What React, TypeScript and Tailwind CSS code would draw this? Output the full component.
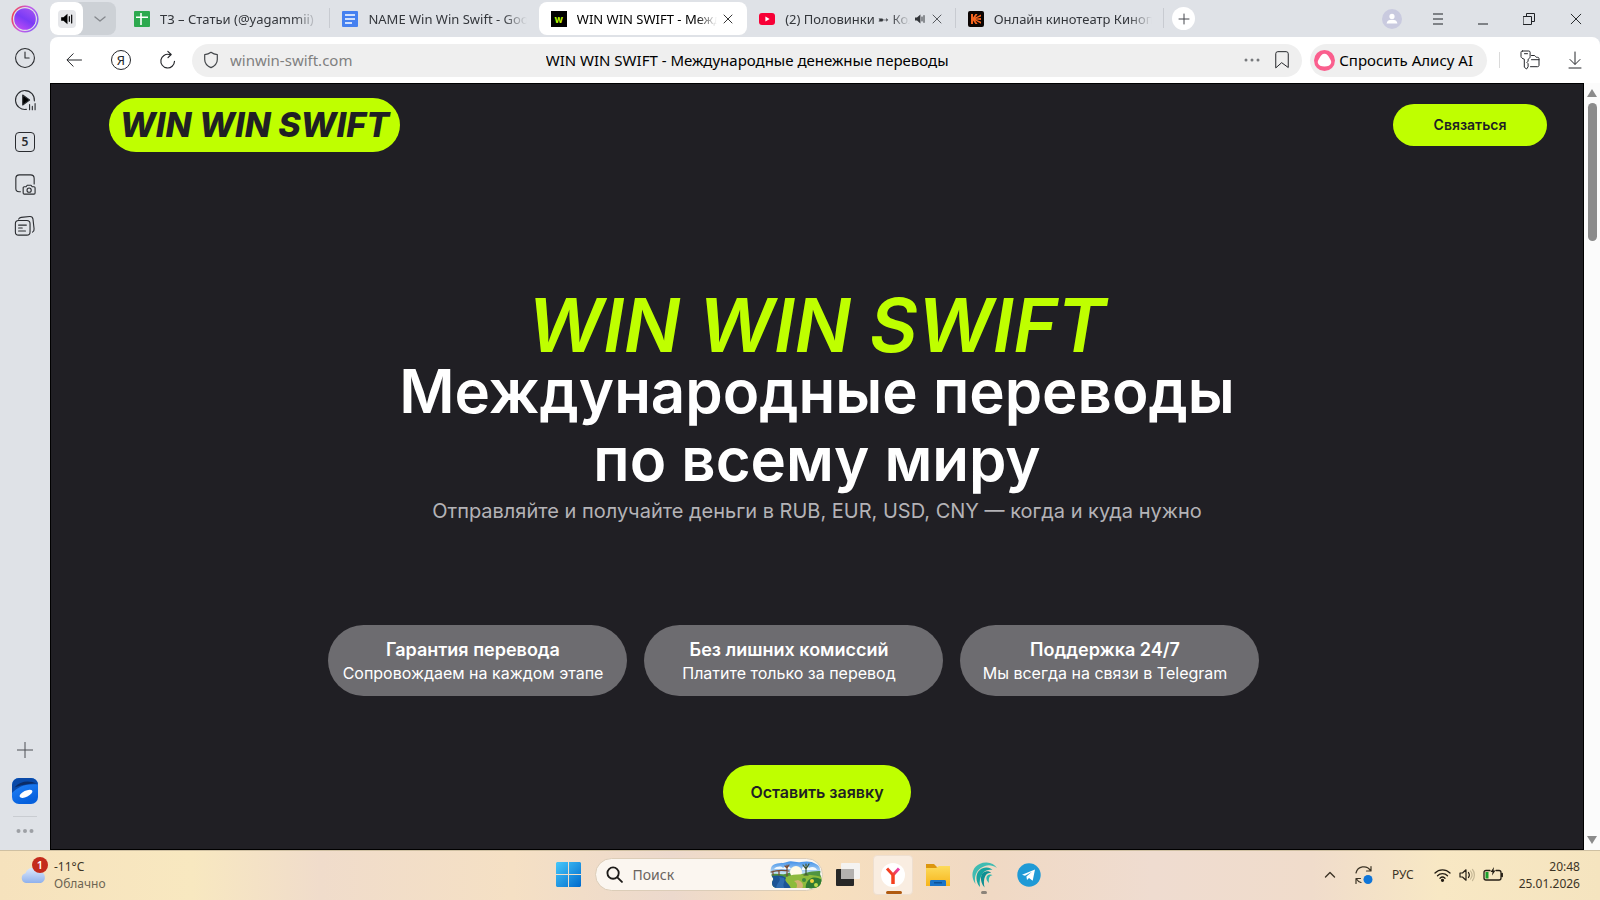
import { ReactNode } from "react";
import clsx from "clsx";

const chromeFont = "font-['Noto_Sans','Open_Sans',sans-serif]";
const siteFont = "font-['Inter',sans-serif]";

interface IconProps {
  className?: string;
  box?: string;
  width?: number;
  children: ReactNode;
}

const Icon = ({ className, box = "0 0 24 24", width = 1.2, children }: IconProps) => (
  <svg
    viewBox={box}
    className={clsx("shrink-0", className)}
    fill="none"
    stroke="currentColor"
    strokeWidth={width}
    strokeLinecap="round"
    strokeLinejoin="round"
    aria-hidden="true"
  >
    {children}
  </svg>
);

const CloseIcon = ({ className }: { className?: string }) => (
  <Icon className={className} box="0 0 10 10" width={0.8}>
    <path d="M1 1l8 8M9 1L1 9" />
  </Icon>
);

const SheetsIcon = () => (
  <Icon className="size-4" box="0 0 16 16" width={1.6}>
    <rect width="16" height="16" rx="1" fill="#2da94f" stroke="none" />
    <path d="M2 6.2h12M7 2v12" stroke="#fff" strokeLinecap="butt" />
  </Icon>
);

const DocsIcon = () => (
  <Icon className="size-4" box="0 0 16 16" width={1.6}>
    <rect width="16" height="16" rx="1" fill="#4681f0" stroke="none" />
    <path d="M3 4h10M3 8h10M3 12h7" stroke="#fff" strokeLinecap="butt" />
  </Icon>
);

const YoutubeIcon = () => (
  <Icon className="size-4" box="0 0 16 16">
    <rect y="2" width="16" height="12" rx="3" fill="#f70036" stroke="none" />
    <path d="M6.4 5.6v4.8L10.6 8z" fill="#fff" stroke="none" />
  </Icon>
);

const KinoIcon = () => (
  <Icon className="size-4" box="0 0 16 16">
    <rect width="16" height="16" rx="2" fill="#0b0503" stroke="none" />
    <path
      d="M3 3h2v3.6L7.4 3h2.2L7.2 6.6 13 3.4v2L7.6 7.5l5.4-.6v2.2l-5.4-.5 5.4 2.1v2L7.2 9.5 9.6 13H7.4L5 9.5V13H3z"
      fill="#f5641e"
      stroke="none"
    />
  </Icon>
);

const SiteIcon = () => (
  <span className="flex size-4 shrink-0 items-center justify-center bg-black font-['Inter',sans-serif] text-[10px] leading-none font-bold text-[#b9f600]">
    w
  </span>
);

const SpeakerIcon = ({ className }: { className?: string }) => (
  <Icon className={className} box="0 0 12 12" width={1}>
    <path d="M1 4.4h2L6.4 1.6v8.8L3 7.6H1z" fill="currentColor" stroke="none" />
    <path d="M8 4v4M10 2.6v6.8" />
  </Icon>
);

interface TabProps {
  icon: ReactNode;
  title: string;
  active?: boolean;
  sound?: boolean;
  closable?: boolean;
  divider?: boolean;
}

const Tab = ({ icon, title, active, sound, closable, divider }: TabProps) => (
  <div
    className={clsx(
      "relative flex h-[33px] min-w-0 flex-1 items-center rounded-lg px-3",
      active ? "bg-white text-black" : "text-[#33363b]",
    )}
  >
    <button className="flex min-w-0 grow items-center gap-2.5 text-left">
      {icon}
      <span className="grow overflow-hidden text-[13px] leading-5 whitespace-nowrap [mask-image:linear-gradient(to_right,black_85%,transparent)]">
        {title}
      </span>
    </button>
    {sound && <SpeakerIcon className="ml-1 size-3" />}
    {closable && (
      <button aria-label="Закрыть вкладку" className="ml-1 p-0.5">
        <CloseIcon className="size-2.5" />
      </button>
    )}
    {divider && <span className="absolute top-1.5 right-0 h-5 w-px bg-[#c8cbd1]" />}
  </div>
);

const TabStrip = () => (
  <header className="flex h-[37px] shrink-0 items-center">
    <div className="flex w-[50px] shrink-0 justify-center">
      <button aria-label="Алиса">
        <Icon className="size-7" box="0 0 28 28" width={1.6}>
          <defs>
            <linearGradient id="ring" x1="0" y1="0.2" x2="1" y2="0.6">
              <stop offset="0" stopColor="#f4434e" />
              <stop offset="0.5" stopColor="#c95be8" />
              <stop offset="1" stopColor="#8a5cf5" />
            </linearGradient>
            <linearGradient id="ball" x1="0.2" y1="1" x2="0.8" y2="0">
              <stop offset="0" stopColor="#c04cf5" />
              <stop offset="0.5" stopColor="#7a3bf6" />
              <stop offset="1" stopColor="#a352f3" />
            </linearGradient>
          </defs>
          <circle cx="14" cy="14" r="12.8" stroke="url(#ring)" />
          <circle cx="14" cy="14" r="10.8" fill="url(#ball)" stroke="none" />
        </Icon>
      </button>
    </div>
    <div className="flex h-[33px] w-[66px] shrink-0 rounded-lg bg-[#cdd1d6]">
      <button aria-label="Звук" className="flex w-[33px] items-center justify-center rounded-lg bg-white">
        <span className="flex size-[18px] items-center justify-center rounded bg-[#e6e7ea]">
          <SpeakerIcon className="size-3.5" />
        </span>
      </button>
      <button aria-label="Список вкладок" className="flex grow items-center justify-center text-[#85888d]">
        <Icon className="size-3" box="0 0 12 12" width={1.4}>
          <path d="M1 4l5 4 5-4" />
        </Icon>
      </button>
    </div>
    <nav aria-label="Вкладки" className="ml-1.5 flex w-[1042px] min-w-0 items-center">
      <Tab icon={<SheetsIcon />} title="ТЗ – Статьи (@yagammii)" divider />
      <Tab icon={<DocsIcon />} title="NAME Win Win Swift - Goo" />
      <Tab icon={<SiteIcon />} title="WIN WIN SWIFT - Межд" active closable />
      <Tab icon={<YoutubeIcon />} title="(2) Половинки ➸ Кол" sound closable divider />
      <Tab icon={<KinoIcon />} title="Онлайн кинотеатр Киноп" divider />
    </nav>
    <button
      aria-label="Новая вкладка"
      className="ml-2 flex size-[23px] shrink-0 items-center justify-center rounded-full bg-white text-[#44474c]"
    >
      <Icon className="size-3" box="0 0 12 12" width={1}>
        <path d="M6 1v10M1 6h10" />
      </Icon>
    </button>
    <div className="mr-[18px] ml-auto flex items-center gap-[27px] text-[#1f2226]">
      <button aria-label="Профиль" className="flex size-5 items-center justify-center rounded-full bg-[#c9cadf]">
        <Icon className="size-3" box="0 0 12 12">
          <g fill="#fff" stroke="none">
            <circle cx="6" cy="3.4" r="2.6" />
            <path d="M.6 10.6C1 7.8 2.8 6.8 6 6.8s5 1 5.4 3.8z" />
          </g>
        </Icon>
      </button>
      <button aria-label="Меню" className="pr-1.5 pl-1">
        <Icon className="h-3 w-2.5" box="0 0 10 12" width={1}>
          <path d="M0 1h10M0 6h10M0 11h10" />
        </Icon>
      </button>
      <button aria-label="Свернуть" className="pl-0.5">
        <Icon className="h-3 w-2.5" box="0 0 10 12" width={1}>
          <path d="M0 11h10" />
        </Icon>
      </button>
      <button aria-label="Развернуть" className="px-2">
        <Icon className="size-3" box="0 0 12 12" width={1}>
          <path d="M.5 3.5h8v8h-8zM3.5 3.5v-3h8v8h-3" />
        </Icon>
      </button>
      <button aria-label="Закрыть">
        <CloseIcon className="size-3" />
      </button>
    </div>
  </header>
);

const Toolbar = () => (
  <div className="flex h-[46px] shrink-0 items-center rounded-t-lg bg-white text-[#24262a]">
    <div className="flex w-[142px] shrink-0 items-center gap-[27px] pl-3.5">
      <button aria-label="Назад">
        <Icon className="size-5">
          <path d="M21 12H4M11 4.5L3.5 12l7.5 7.5" />
        </Icon>
      </button>
      <button
        aria-label="Яндекс"
        className="flex size-5 items-center justify-center rounded-full border border-[#24262a] text-[13px] leading-none"
      >
        Я
      </button>
      <button aria-label="Обновить">
        <Icon className="size-5" width={1.4}>
          <path d="M19.8 13.6A8.2 8.2 0 1 1 13.6 5.4h2M11.8 1.6l4 3.8-3.8 3.8" />
        </Icon>
      </button>
    </div>
    <div className="flex h-[33px] min-w-0 grow items-center rounded-full bg-[#efefef] px-2.5">
      <div className="flex flex-1 items-center gap-2.5">
        <Icon className="size-[18px] text-[#44474b]" width={1.6}>
          <path d="M12 1.8c2.6 1.9 5.2 2.8 8.4 3v6.4c0 5-3.3 8.6-8.4 11-5.1-2.4-8.4-6-8.4-11V4.8c3.2-.2 5.8-1.1 8.4-3z" />
        </Icon>
        <input
          aria-label="Адресная строка"
          className="w-60 bg-transparent text-[15px] text-[#808080] outline-none"
          defaultValue="winwin-swift.com"
        />
      </div>
      <span className="truncate text-[15px] leading-5 text-black">
        WIN WIN SWIFT - Международные денежные переводы
      </span>
      <div className="flex flex-1 items-center justify-end gap-3">
        <button aria-label="Ещё" className="text-[#77797c]">
          <Icon className="h-1 w-4" box="0 0 16 4">
            <g fill="currentColor" stroke="none">
              <circle cx="2" cy="2" r="1.5" />
              <circle cx="8" cy="2" r="1.5" />
              <circle cx="14" cy="2" r="1.5" />
            </g>
          </Icon>
        </button>
        <button aria-label="Закладки">
          <Icon className="size-5">
            <path d="M4.5 21V4.5A2.5 2.5 0 0 1 7 2h10a2.5 2.5 0 0 1 2.5 2.5V21L12 15.5z" />
          </Icon>
        </button>
      </div>
    </div>
    <button className="ml-2 flex h-[33px] shrink-0 items-center gap-1 rounded-full bg-[#efefef] pr-3.5 pl-1 text-[15px] text-black">
      <Icon className="size-[21px]" box="0 0 21 21">
        <circle cx="10.5" cy="10.5" r="10.5" fill="#fa5f8e" stroke="none" />
        <path
          d="M10.5 3.7c2.4 0 3.6 1.7 5 4.2 1.6 2.8 2 3.7 1.6 5.1-.6 2.4-3.2 3.6-6.6 3.6s-6-1.2-6.6-3.6c-.4-1.4 0-2.3 1.6-5.1 1.4-2.5 2.6-4.2 5-4.2z"
          fill="#fff"
          stroke="none"
        />
      </Icon>
      Спросить Алису AI
    </button>
    <div className="ml-3 h-4 w-px bg-[#dadada]" />
    <div className="mr-4 ml-5 flex items-center gap-7">
      <button aria-label="Пароли">
        <Icon className="size-5" box="0 0 20 20" width={1}>
          <path d="M2.5 1h6.3c.8 0 1.3.5 1.3 1.3v4.4c0 1.2-.9 2-2 2.5v2l-1.2 1.2 1.2 1.3v3.1L6.5 19l-2.2-1.8v-8C2.6 8.6 1 7.8 1 6.5V2.3C1 1.5 1.6 1 2.5 1zM4.5 3.7h3" />
          <path d="M11.5 5.5h2.8c1.2 0 1.2 1.8 2.3 1.8h.9c1 0 1.5.5 1.5 1.5v6.4c0 .9-.5 1.5-1.5 1.5h-7M11.5 9.7H19" />
        </Icon>
      </button>
      <button aria-label="Загрузки" className="pr-0.5">
        <Icon className="h-[18px] w-3.5" box="0 0 14 18" width={1}>
          <path d="M7 1v12M2 8.5l5 5 5-5M1 17h12" />
        </Icon>
      </button>
    </div>
  </div>
);

const Sidebar = () => (
  <aside className="flex w-[50px] shrink-0 flex-col items-center justify-between pt-2.5 pb-[17px] text-[#2a2c30]">
    <div className="flex flex-col gap-5">
      <button aria-label="История">
        <Icon className="size-[22px]">
          <circle cx="12" cy="12" r="10.3" />
          <path d="M12 5.5V12h4.5" />
        </Icon>
      </button>
      <button aria-label="Видео">
        <Icon className="size-[22px]">
          <path d="M13.5 22.2A10.3 10.3 0 1 1 22.2 13" />
          <path d="M9.5 6.5v11l7.5-5.5z" fill="#000" />
          <path d="M17 17v5.5M20 19v3.5M23 16v6.5" />
        </Icon>
      </button>
      <button aria-label="Вкладки" className="flex size-[22px] items-center justify-center">
        <span className="flex size-5 items-center justify-center rounded border border-[#2a2c30] text-xs leading-none font-semibold">
          5
        </span>
      </button>
      <button aria-label="Скриншот">
        <Icon className="size-[22px]">
          <path d="M7 20.5H5.5C3 20.5 2 19.5 2 17V6c0-2.5 1.5-4 4-4h12c2.5 0 4 1.5 4 4v6" />
          <path d="M10 16.2c0-.8.4-1.2 1.2-1.2h2l1.2-1.6h4.2l1.2 1.6h2c.8 0 1.2.4 1.2 1.2v5.6c0 .8-.4 1.2-1.2 1.2H11.2c-.8 0-1.2-.4-1.2-1.2z" />
          <circle cx="16.5" cy="18.7" r="2.3" />
        </Icon>
      </button>
      <button aria-label="Коллекции">
        <Icon className="size-[22px]">
          <rect x="1.5" y="6" width="16" height="16" rx="3.5" />
          <path d="M5 4.5c.6-1.200 1.500-1.700 2.800-1.900l9.200-1c2.200-.2 3.400.7 3.700 2.900l1.200 10.500c.2 1.600-.3 2.900-1.700 3.700M5 11h8.500M5 14.200h4M5 17.400h7.500" />
        </Icon>
      </button>
    </div>
    <div className="flex flex-col items-center">
      <button aria-label="Добавить" className="mb-5 text-[#4c4f54]">
        <Icon className="size-4" box="0 0 16 16" width={1}>
          <path d="M8 0v16M0 8h16" />
        </Icon>
      </button>
      <button aria-label="Диск">
        <Icon className="size-[26px]" box="0 0 26 26">
          <defs>
            <linearGradient id="disk" x1="0" y1="0" x2="0.4" y2="1">
              <stop offset="0" stopColor="#2a8bff" />
              <stop offset="1" stopColor="#0560dd" />
            </linearGradient>
          </defs>
          <g stroke="none">
            <rect width="26" height="26" rx="7" fill="url(#disk)" />
            <path d="M0 15V7a7 7 0 0 1 7-7h12a7 7 0 0 1 7 6.5C16 5 5 8.500 0 15z" fill="#0a4aa8" />
            <path d="M2.500 9.500C8 3 17 2 24.500 5.500 16 5.500 8 7.500 2.500 9.500z" fill="#0b2c66" />
            <ellipse cx="14" cy="15.800" rx="7" ry="3.100" fill="#fff" transform="rotate(-26 14 15.800)" />
          </g>
        </Icon>
      </button>
      <div className="my-3 h-px w-6 bg-[#c9ccd1]" />
      <button aria-label="Ещё" className="text-[#9da0a5]">
        <Icon className="h-1 w-[18px]" box="0 0 18 4">
          <g fill="currentColor" stroke="none">
            <circle cx="2.5" cy="2" r="2" />
            <circle cx="9" cy="2" r="2" />
            <circle cx="15.5" cy="2" r="2" />
          </g>
        </Icon>
      </button>
    </div>
  </aside>
);

const features = [
  { title: "Гарантия перевода", text: "Сопровождаем на каждом этапе" },
  { title: "Без лишних комиссий", text: "Платите только за перевод" },
  { title: "Поддержка 24/7", text: "Мы всегда на связи в Telegram" },
];

const Site = () => (
  <main className={clsx("flex min-w-0 grow flex-col border border-black bg-[#201f24]", siteFont)}>
    <div className="flex items-center justify-between pt-3.5 pr-9 pl-[58px]">
      <a
        href="#"
        className="flex h-[54px] w-[291px] items-center justify-center rounded-full bg-[#bfff00] text-[34px] leading-none font-extrabold text-[#201f24] italic"
      >
        WIN WIN SWIFT
      </a>
      <button className="h-[42px] w-[154px] rounded-full bg-[#bfff00] text-sm font-semibold text-[#201f24]">
        Связаться
      </button>
    </div>
    <div className="flex flex-col items-center pt-[141px] text-center">
      <h1 className="text-[60px] leading-[68px] font-semibold text-white">
        <span className="block text-[74px] leading-[64px] text-[#bfff00] italic">WIN WIN SWIFT</span>
        Международные переводы
        <br />
        по всему миру
      </h1>
      <p className="text-xl leading-9 text-[#b4b3b7]">
        Отправляйте и получайте деньги в RUB, EUR, USD, CNY — когда и куда нужно
      </p>
      <ul className="mt-24 mr-12 flex gap-[17px] text-white">
        {features.map(({ title, text }) => (
          <li
            key={title}
            className="flex h-[71px] w-[299px] flex-col items-center justify-center rounded-full bg-[#6d6c70] pr-2"
          >
            <h2 className="text-lg leading-6 font-semibold">{title}</h2>
            <p className="text-base leading-[22px] whitespace-nowrap">{text}</p>
          </li>
        ))}
      </ul>
      <button className="mt-[69px] h-[54px] w-[188px] rounded-full bg-[#bfff00] text-base font-semibold text-[#201f24]">
        Оставить заявку
      </button>
    </div>
  </main>
);

const Scrollbar = () => (
  <div className="flex w-4 shrink-0 flex-col items-center bg-[#fbfbfb] py-1.5 text-[#8b8b8b]">
    <Icon className="h-2 w-2.5" box="0 0 10 8">
      <path d="M5 0l5 8H0z" fill="currentColor" stroke="none" />
    </Icon>
    <div className="mt-1.5 h-[138px] w-[9px] rounded-full bg-[#8b8b8b]" />
    <Icon className="mt-auto h-2 w-2.5" box="0 0 10 8">
      <path d="M5 8l5-8H0z" fill="currentColor" stroke="none" />
    </Icon>
  </div>
);

const LandscapeArt = () => (
  <Icon className="h-7 w-[52px]" box="0 0 52 28">
    <defs>
      <linearGradient id="sky" x1="0" y1="0" x2="0" y2="1">
        <stop offset="0" stopColor="#3f8fe8" />
        <stop offset="0.5" stopColor="#d6ecf8" />
      </linearGradient>
      <clipPath id="blob">
        <path d="M2 5C6 1 12 3 17 1c5-2 9 1 14 0s11-1 15 2c4 2 5 6 4 10 2 4 2 9-1 12-3 3-9 2-14 2H8c-4 0-6-2-6-5 0-2 2-3 1-5-3-4-3-9-1-12z" />
      </clipPath>
    </defs>
    <g clipPath="url(#blob)" stroke="none">
      <rect width="52" height="28" fill="url(#sky)" />
      <path d="M4 8c3-3 7-3 9-1 3-3 7-2 8 1zM32 7c3-3 6-2 7 0 3-2 7-1 8 2H32z" fill="#f2f8fd" />
      <path d="M0 14c6-3 10 0 15-1s6-2 11 0 12-4 26-3v18H0z" fill="#4f9440" />
      <circle cx="26" cy="11" r="6" fill="#fffbe6" />
      <path d="M16 16c10-4 22-3 36 0v12H12z" fill="#8dbb3c" />
      <path d="M0 15c8-1 13-1 16 2-3 3 4 6 5 11H0z" fill="#1c5496" />
      <path d="M6 28c0-6 6-8 3-12l5 1c2 4-3 6 1 11z" fill="#2f6cb0" />
      <path d="M26 28c2-4 1-6-2-8l4-1c5 2 6 5 4 9z" fill="#d3b173" />
      <path d="M40 18c4-3 9-1 12 1v9H36c-1-4 1-8 4-10z" fill="#2f7a33" />
      <circle cx="42" cy="20" r="2" fill="#f2d23e" />
      <circle cx="46" cy="24" r="2" fill="#bfdc4f" />
      <circle cx="34" cy="19" r="2" fill="#3f8a3a" />
    </g>
    <g stroke="#7a4a33" strokeWidth="1.2">
      <path d="M1 11c6-2 12-2 18-1M3 10v4M9 10v4M17 4v11M15 5l2 2 2-3" />
      <path d="M36 3v11M33 4l3 4 3-5M34 14h4" stroke="#3d5230" />
    </g>
  </Icon>
);

const Taskbar = () => (
  <footer className="flex h-[50px] shrink-0 items-center justify-between border-t border-[#cfc0a2] bg-[linear-gradient(90deg,#f6e2bd_0%,#f8e8c0_12%,#f0dccb_20%,#f5e0c4_32%,#ecd9cd_42%,#f8e0bd_50%,#f0d9c4_62%,#efdcd0_72%,#f0dccb_82%,#f8e8c4_90%,#f5e4bf_100%)] pb-0.5 text-[#3c3426]">
    <button className="flex flex-1 items-center gap-1 pl-5 text-left text-xs leading-[17px]">
      <span className="relative">
        <Icon className="h-5 w-7" box="0 0 28 20">
          <defs>
            <linearGradient id="cloud" x1="0" y1="0" x2="0" y2="1">
              <stop offset="0" stopColor="#dfeafb" />
              <stop offset="1" stopColor="#8fb1ec" />
            </linearGradient>
          </defs>
          <path d="M6 18a5 5 0 0 1-.5-9.800A8 8 0 0 1 20 6.500 6 6 0 0 1 21 18z" fill="url(#cloud)" stroke="none" />
        </Icon>
        <span className="absolute -top-2 left-3 flex size-4 items-center justify-center rounded-full bg-[#c42b1c] text-[11px] leading-none font-semibold text-white">
          1
        </span>
      </span>
      <span className="ml-0.5">
        <span className="block">-11°C</span>
        <span className="block text-[#6d6553]">Облачно</span>
      </span>
    </button>
    <div className="flex items-center">
      <button aria-label="Пуск" className="mr-3.5">
        <Icon className="size-[25px]" box="0 0 25 25">
          <defs>
            <linearGradient id="win" x1="0" y1="0" x2="1" y2="1">
              <stop offset="0" stopColor="#46c8fa" />
              <stop offset="1" stopColor="#0069cc" />
            </linearGradient>
          </defs>
          <path d="M1 0h11v12H0V1zM13 0h11l1 1v11H13zM0 13h12v12H1l-1-1zM13 13h12v11l-1 1H13z" fill="url(#win)" stroke="none" />
        </Icon>
      </button>
      <label className="flex h-[33px] w-[228px] items-center gap-2.5 rounded-full border border-[#dccdb8] bg-[#fbf6f0] pl-2.5">
        <Icon className="size-[17px] text-[#1d1b19]" width={2.6}>
          <circle cx="10" cy="10" r="8" />
          <path d="M16 16l6.5 6.5" />
        </Icon>
        <input
          type="search"
          aria-label="Поиск"
          placeholder="Поиск"
          className="min-w-0 grow bg-transparent text-sm outline-none placeholder:text-[#6a645e]"
        />
        <LandscapeArt />
      </label>
      <button aria-label="Представление задач" className="ml-3">
        <Icon className="size-[26px]" box="0 0 26 26">
          <g stroke="none">
            <rect x="6" y="1" width="19" height="16" rx="1" fill="#f4f3f1" />
            <rect x="1" y="7" width="18" height="17" rx="1" fill="#272727" />
            <path d="M6 7h13v10H6z" fill="#b3b1af" />
          </g>
        </Icon>
      </button>
      <button
        aria-label="Яндекс Браузер"
        className="relative ml-3 flex size-10 items-center justify-center rounded border border-[#eedfd0] bg-[#f9ede1]"
      >
        <Icon className="size-6" box="0 0 24 24" width={3}>
          <defs>
            <linearGradient id="ya" x1="0" y1="1" x2="1" y2="0">
              <stop offset="0.5" stopColor="#f5401f" />
              <stop offset="1" stopColor="#e83fb4" />
            </linearGradient>
          </defs>
          <circle cx="12" cy="12" r="12" fill="#fff" stroke="none" />
          <path d="M6 5.500l6 6.500 6-6.500M12 12v9" stroke="url(#ya)" strokeLinecap="butt" />
          <path d="M12 12v9" stroke="#f5401f" strokeLinecap="butt" />
        </Icon>
        <span className="absolute bottom-0 left-3 h-[3px] w-4 rounded-full bg-[#b05a10]" />
      </button>
      <button aria-label="Проводник" className="ml-3">
        <Icon className="size-[26px]" box="0 0 26 26">
          <defs>
            <linearGradient id="folder" x1="0" y1="0" x2="0" y2="1">
              <stop offset="0" stopColor="#fddb5b" />
              <stop offset="1" stopColor="#f7b51c" />
            </linearGradient>
          </defs>
          <g stroke="none">
            <path d="M1 2h8l3 3h12v5H1z" fill="#dc960f" />
            <path d="M1 6h10l3-2h11v20H1z" fill="url(#folder)" />
            <path d="M5 24v-4.500c0-1 .6-1.500 1.500-1.500h13c.9 0 1.500.5 1.500 1.500V24z" fill="#1a75c9" />
            <rect x="9" y="20" width="8" height="1.500" fill="#0c5397" />
          </g>
        </Icon>
      </button>
      <button aria-label="Волна" className="relative ml-5">
        <Icon className="size-[26px]" box="0 0 26 26">
          <g stroke="none">
            <path d="M4.500 22C-2 13 2 1 15 .5c5-.2 8.500 2 11 5.500-4-2.500-8-3.500-12-2C6.500 6.500 2.500 13 4.500 22z" fill="#3fbcb2" />
            <path d="M9 25C2.500 17 5.500 6 15 5.500c3-.2 5 .8 6.500 2.500-3.500-.6-7 0-9.500 3-3 3.600-4 8.500-3 14z" fill="#17a39f" />
            <path d="M13.500 25.500C8 19 9 10 15.500 9.200c2-.2 3.500.3 4.500 1.500-2.500 0-4.500.8-5.700 3.200-1.600 3-1.800 7-.8 11.600z" fill="#0e8f93" />
            <path d="M18 21c-3.500-3-3.500-7.500.5-8.500 1.200-.3 2.300 0 3 .8-1.700.2-2.800 1-3.300 2.500-.5 1.600-.5 3.300-.2 5.200z" fill="#2cb7ad" />
          </g>
        </Icon>
        <span className="absolute -bottom-1.5 left-2.5 h-[3px] w-1.5 rounded-full bg-[#8b8379]" />
      </button>
      <button aria-label="Telegram" className="mr-1 ml-5">
        <Icon className="size-6" box="0 0 24 24">
          <circle cx="12" cy="12" r="11.700" fill="#1f9ad6" stroke="none" />
          <path d="M5 11.700l13-5.200-2.300 11.300-3.700-2.700-2 2-.6-3.700 5.600-4.600-7 4z" fill="#fff" stroke="none" />
        </Icon>
      </button>
    </div>
    <div className="flex flex-1 items-center justify-end pr-5">
      <button aria-label="Скрытые значки" className="mr-[18px]">
        <Icon className="size-3" box="0 0 12 12" width={1.4}>
          <path d="M1.5 8L6 3.5 10.5 8" />
        </Icon>
      </button>
      <button aria-label="Синхронизация" className="mr-[18px]">
        <Icon className="size-5" box="0 0 20 20">
          <path d="M2 8A8 8 0 0 1 16.500 5.500M17 1.500v4.500h-4.500M2 18.500V13.500h4.500M2.500 14c1 1.800 2.500 3 4.500 3.500" />
          <circle cx="14" cy="14.500" r="4.500" fill="#0f75d8" stroke="none" />
        </Icon>
      </button>
      <button className="mr-5 text-xs">РУС</button>
      <button aria-label="Сеть, звук и батарея" className="flex items-center gap-2 text-[#241e14]">
        <Icon className="h-4 w-[17px]" box="0 0 17 16" width={1.3}>
          <path d="M1 6a10.500 10.500 0 0 1 15 0M3.500 8.700a7 7 0 0 1 10 0M6 11.200a3.600 3.600 0 0 1 5 0" />
          <circle cx="8.500" cy="13.300" r="1" fill="currentColor" />
        </Icon>
        <Icon className="size-4" box="0 0 16 16">
          <path d="M1 6h2.500L7 2.800v10.400L3.500 10H1z" />
          <path d="M9.500 5.500c1 1.500 1 3.500 0 5" />
          <path d="M11.500 4c2 2.500 2 5.500 0 8M13.500 2.500c2.500 3 2.500 8 0 11" stroke="#c5b795" />
        </Icon>
        <Icon className="h-4 w-5" box="0 0 20 16" width={1.3}>
          <path d="M7 3.500H3c-1.300 0-2 .7-2 2V11c0 1.300.7 2 2 2h13c1.300 0 2-.7 2-2V5.500c0-1.300-.7-2-2-2h-3M19.300 6.500v3" />
          <rect x="2.500" y="5" width="3" height="6.500" fill="#19a02c" stroke="none" />
          <path d="M11 0L7.500 5h2L9 8.500l3.500-5h-2z" fill="currentColor" stroke="none" />
        </Icon>
      </button>
      <button className="ml-4 text-right text-xs leading-[17px]">
        20:48
        <br />
        25.01.2026
      </button>
    </div>
  </footer>
);

export default function App() {
  return (
    <div className={clsx("flex h-screen flex-col overflow-hidden bg-[#dfe2e7]", chromeFont)}>
      <TabStrip />
      <div className="flex min-h-0 grow">
        <Sidebar />
        <div className="flex min-w-0 grow flex-col">
          <Toolbar />
          <div className="flex min-h-0 grow">
            <Site />
            <Scrollbar />
          </div>
        </div>
      </div>
      <Taskbar />
    </div>
  );
}
